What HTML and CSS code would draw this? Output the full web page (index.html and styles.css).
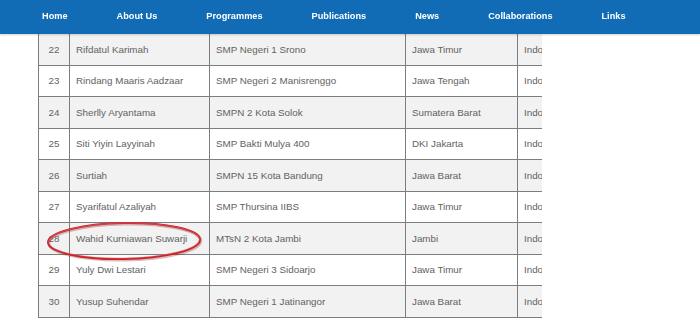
FILE: index.html
```html
<!DOCTYPE html>
<html lang="id">
<head>
<meta charset="utf-8">
<title>Participants</title>
<link rel="stylesheet" href="styles.css">
</head>
<body>
<header class="topbar">
  <nav>
    <ul class="menu">
      <li>Home</li>
      <li>About Us</li>
      <li>Programmes</li>
      <li>Publications</li>
      <li>News</li>
      <li>Collaborations</li>
      <li>Links</li>
    </ul>
  </nav>
</header>
<main class="page">
  <div class="table-wrap">
    <table class="list">
      <colgroup>
        <col class="c-no"><col class="c-name"><col class="c-school"><col class="c-prov"><col class="c-country">
      </colgroup>
      <tbody>
        <tr><td class="no">22</td><td>Rifdatul Karimah</td><td>SMP Negeri 1 Srono</td><td>Jawa Timur</td><td>Indonesia</td></tr>
        <tr><td class="no">23</td><td>Rindang Maaris Aadzaar</td><td>SMP Negeri 2 Manisrenggo</td><td>Jawa Tengah</td><td>Indonesia</td></tr>
        <tr><td class="no">24</td><td>Sherlly Aryantama</td><td>SMPN 2 Kota Solok</td><td>Sumatera Barat</td><td>Indonesia</td></tr>
        <tr><td class="no">25</td><td>Siti Yiyin Layyinah</td><td>SMP Bakti Mulya 400</td><td>DKI Jakarta</td><td>Indonesia</td></tr>
        <tr><td class="no">26</td><td>Surtiah</td><td>SMPN 15 Kota Bandung</td><td>Jawa Barat</td><td>Indonesia</td></tr>
        <tr><td class="no">27</td><td>Syarifatul Azaliyah</td><td>SMP Thursina IIBS</td><td>Jawa Timur</td><td>Indonesia</td></tr>
        <tr><td class="no">28</td><td>Wahid Kurniawan Suwarji</td><td>MTsN 2 Kota Jambi</td><td>Jambi</td><td>Indonesia</td></tr>
        <tr><td class="no">29</td><td>Yuly Dwi Lestari</td><td>SMP Negeri 3 Sidoarjo</td><td>Jawa Timur</td><td>Indonesia</td></tr>
        <tr><td class="no">30</td><td>Yusup Suhendar</td><td>SMP Negeri 1 Jatinangor</td><td>Jawa Barat</td><td>Indonesia</td></tr>
      </tbody>
    </table>
    <svg class="mark" width="162" height="46" viewBox="0 0 162 46" aria-hidden="true">
      <ellipse cx="81" cy="23" rx="76" ry="18" fill="none" stroke="#8e1a1e" stroke-width="3" opacity="0.3" transform="translate(0.8 1)"/>
      <ellipse cx="81" cy="23" rx="76" ry="18" fill="none" stroke="#c9252c" stroke-width="2"/>
      <ellipse cx="81" cy="22.5" rx="75.5" ry="17.5" fill="none" stroke="#e8747a" stroke-width="0.6" opacity="0.7"/>
    </svg>
  </div>
</main>
</body>
</html>
```

FILE: styles.css
```css
html, body {
  margin: 0;
  padding: 0;
  background: #ffffff;
}

body {
  font-family: "Liberation Sans", Arial, sans-serif;
}

.topbar {
  position: fixed;
  top: 0;
  left: 0;
  right: 0;
  height: 34px;
  background: #116cb5;
  box-shadow: 0 1px 2px rgba(0, 0, 0, 0.18);
  z-index: 5;
}

.menu {
  list-style: none;
  margin: 0;
  padding: 0 0 0 42px;
  display: flex;
  gap: 49px;
  height: 34px;
  align-items: center;
}

.menu li {
  color: #ffffff;
  font-weight: bold;
  font-size: 9.2px;
  line-height: 1;
}

.page {
  padding-top: 33px;
}

.table-wrap {
  position: relative;
  margin-left: 38px;
  width: 504px;
  overflow: hidden;
}

.list {
  border-collapse: collapse;
  table-layout: fixed;
  width: 620px;
  font-size: 9.8px;
  color: #626262;
}

.c-no { width: 31px; }
.c-name { width: 140px; }
.c-school { width: 196px; }
.c-prov { width: 112px; }
.c-country { width: 141px; }

.list td {
  border: 1px solid #7d7d7d;
  height: 30.5px;
  padding: 0 6px;
  white-space: nowrap;
  overflow: hidden;
}

.list td.no {
  text-align: center;
  padding: 0;
}

.list tr:nth-child(odd) td {
  background: #f2f2f2;
}

.list tr:nth-child(even) td {
  background: #ffffff;
}

.mark {
  position: absolute;
  left: 5px;
  top: 185px;
  transform: rotate(-1deg);
  pointer-events: none;
}
```
